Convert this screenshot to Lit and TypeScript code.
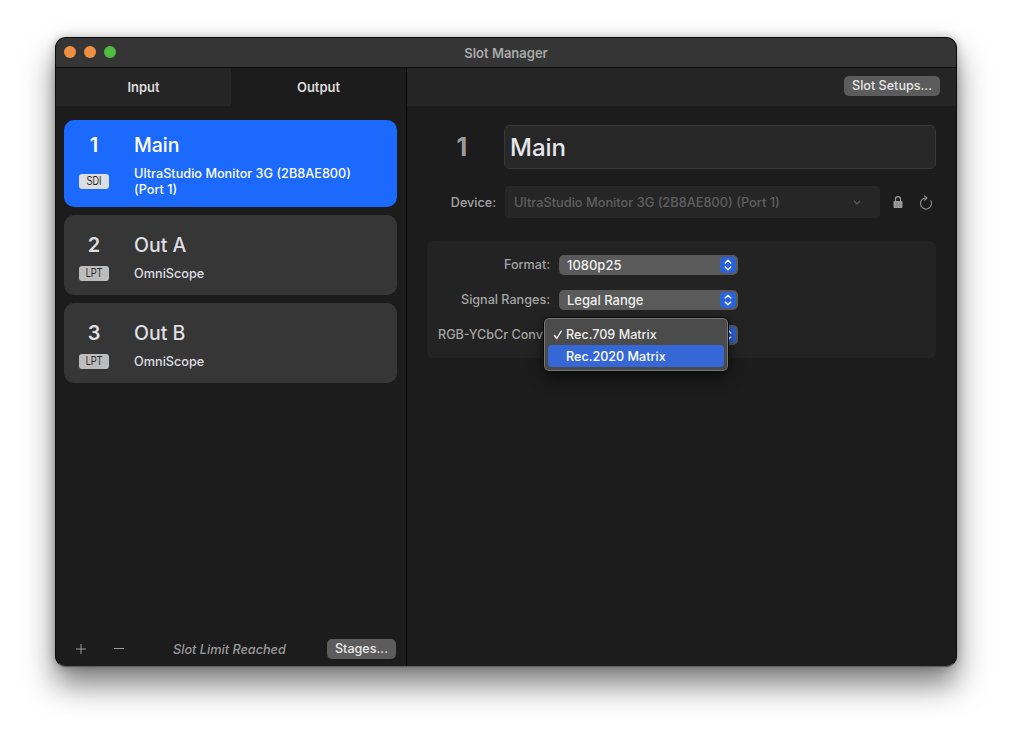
import { LitElement, css, html } from 'lit';
import { customElement } from 'lit/decorators.js';

const slots = [
  { n: '1', name: 'Main', tag: 'SDI', device: 'UltraStudio Monitor 3G (2B8AE800) (Port 1)', active: true },
  { n: '2', name: 'Out A', tag: 'LPT', device: 'OmniScope', active: false },
  { n: '3', name: 'Out B', tag: 'LPT', device: 'OmniScope', active: false },
];

const stepper = html`
  <span class="stepper">
    <svg width="8" height="14" viewBox="0 0 8 14" fill="none" stroke="#fff" stroke-width="1.4" stroke-linecap="round" stroke-linejoin="round">
      <path d="M1.2 5 4 2.2 6.8 5" />
      <path d="M1.2 9 4 11.8 6.8 9" />
    </svg>
  </span>
`;

@customElement('app-root')
export class AppRoot extends LitElement {
  static styles = css`
    :host {
      display: block;
      width: 1012px;
      height: 740px;
      padding: 37px 55px 0;
      box-sizing: border-box;
      background: #fff;
      font-family: Inter, 'Noto Sans', sans-serif;
      color: #e4e4e6;
      overflow: hidden;
    }
    .window {
      position: relative;
      width: 902px;
      height: 630px;
      box-sizing: border-box;
      display: flex;
      flex-direction: column;
      border: 1px solid #0c0c0c;
      border-bottom-color: #5c5c5c;
      border-radius: 11px;
      background: #1c1c1c;
      box-shadow: 0 18px 30px rgba(0, 0, 0, 0.5), 0 0 10px rgba(0, 0, 0, 0.25);
      overflow: hidden;
    }
    .titlebar {
      position: relative;
      flex: none;
      height: 29px;
      display: flex;
      align-items: center;
      justify-content: center;
      background: #353535;
      border-bottom: 1px solid #0e0e0e;
      font-size: 13px;
      font-weight: 600;
      color: #a9a9a9;
    }
    .lights {
      position: absolute;
      left: 8px;
      top: 8px;
      display: flex;
      gap: 8px;
    }
    .lights i {
      width: 12px;
      height: 12px;
      border-radius: 50%;
      background: #ef8e45;
    }
    .lights i.green {
      background: #4fbb3f;
    }
    .main {
      flex: 1;
      display: flex;
      min-height: 0;
    }
    .left {
      flex: none;
      width: 350px;
      display: flex;
      flex-direction: column;
      border-right: 1px solid #060606;
    }
    .tabs {
      flex: none;
      height: 38px;
      display: grid;
      grid-template-columns: 175px 175px;
      font-size: 13px;
      font-weight: 600;
      color: #dcdcdc;
    }
    .tabs div {
      display: flex;
      align-items: center;
      justify-content: center;
    }
    .tabs .off {
      background: #252525;
    }
    .list {
      flex: 1;
      padding: 14px 9px 0 8px;
      display: flex;
      flex-direction: column;
      gap: 8px;
    }
    .card {
      display: grid;
      grid-template-columns: 60px 1fr;
      column-gap: 10px;
      padding: 18px 30px 13px 0;
      border-radius: 10px;
      background: #363636;
      color: #dfdfe3;
    }
    .card.active {
      padding: 13px 30px 9px 0;
      background: #1b69fd;
      color: #fff;
    }
    .num {
      font-size: 20px;
      line-height: 24px;
      font-weight: 600;
      text-align: center;
    }
    .name {
      font-size: 19.5px;
      line-height: 24px;
      font-weight: 500;
    }
    .tagcell {
      margin-top: 8px;
      display: flex;
      align-items: center;
      justify-content: center;
    }
    .tag {
      width: 30px;
      height: 15px;
      border-radius: 3px;
      background: #bcbcbc;
      color: #2a2a2a;
      font-family: 'Liberation Sans', sans-serif;
      font-size: 12px;
      line-height: 15px;
      text-align: center;
    }
    .tag span {
      display: inline-block;
      transform: scaleX(0.75);
    }
    .active .tag {
      background: #dcdee2;
    }
    .device {
      margin-top: 9px;
      font-size: 12.7px;
      line-height: 16px;
      font-weight: 500;
    }
    .footer {
      flex: none;
      height: 38px;
      box-sizing: border-box;
      padding: 4px 10px 0 19px;
      display: flex;
      align-items: center;
      color: #9a9a9a;
    }
    .footer svg {
      flex: none;
    }
    .footer .minus {
      margin-left: 26px;
    }
    .limit {
      flex: 1;
      text-align: center;
      font-size: 12.7px;
      font-style: italic;
      font-weight: 500;
      padding-left: 7px;
      box-sizing: border-box;
    }
    .btn {
      flex: none;
      height: 20px;
      padding: 0 8px;
      border-radius: 5px;
      background: #5c5c5c;
      color: #e6e6e6;
      font-size: 12.6px;
      font-weight: 500;
      line-height: 19px;
      box-sizing: border-box;
    }
    .right {
      flex: 1;
      display: flex;
      flex-direction: column;
    }
    .toolbar {
      flex: none;
      height: 38px;
      box-sizing: border-box;
      padding: 8px 16px 0 0;
      display: flex;
      justify-content: flex-end;
      align-items: flex-start;
      background: #252525;
    }
    .detail {
      padding: 19px 20px 0 20px;
    }
    .title-row {
      display: flex;
      align-items: center;
      height: 44px;
    }
    .big-num {
      width: 77px;
      padding-right: 7px;
      box-sizing: border-box;
      text-align: center;
      font-size: 25px;
      font-weight: 700;
      color: #9b9b9b;
    }
    .field {
      flex: 1;
      height: 44px;
      box-sizing: border-box;
      padding-left: 5px;
      border: 1px solid #383838;
      border-radius: 6px;
      background: #272727;
      font-size: 24px;
      line-height: 43px;
      font-weight: 500;
      color: #e6e7ec;
    }
    .device-row {
      margin-top: 17px;
      height: 32px;
      display: flex;
      align-items: center;
      font-size: 12.8px;
      font-weight: 500;
      color: #a5a5a5;
    }
    .device-row label {
      width: 69px;
      text-align: right;
      font-size: 12.6px;
    }
    .fake-select {
      margin-left: 9px;
      width: 375px;
      height: 32px;
      box-sizing: border-box;
      padding: 0 19px 0 9px;
      display: flex;
      align-items: center;
      justify-content: space-between;
      border-radius: 4px;
      background: #262626;
      color: #5f5f5f;
    }
    .lock {
      margin-left: 12px;
    }
    .reload {
      margin-left: 15px;
    }
    .panel {
      margin-top: 23px;
      height: 117px;
      box-sizing: border-box;
      padding-top: 14px;
      display: flex;
      flex-direction: column;
      gap: 15px;
      border-radius: 6px;
      background: #232323;
    }
    .row {
      height: 20px;
      display: flex;
      align-items: center;
      font-size: 12.6px;
      font-weight: 500;
      color: #a5a5a5;
    }
    .row label {
      width: 123px;
      flex: none;
      box-sizing: border-box;
      padding-bottom: 2px;
      text-align: right;
      white-space: nowrap;
    }
    .row label.clip {
      padding-left: 11px;
      width: 116px;
      text-align: left;
      overflow: hidden;
    }
    .row label.clip + .popup {
      margin-left: 16px;
    }
    .row .popup {
      position: relative;
      margin-left: 9px;
      width: 179px;
      height: 20px;
      box-sizing: border-box;
      padding-left: 8px;
      display: flex;
      align-items: center;
      border-radius: 5px;
      background: #5a5a5a;
      color: #eee;
      font-size: 13px;
    }
    .stepper {
      position: absolute;
      right: 2px;
      top: 2px;
      width: 16px;
      height: 16px;
      display: flex;
      align-items: center;
      justify-content: center;
      border-radius: 4px;
      background: #2a63d8;
    }
    .menu {
      position: absolute;
      left: 487px;
      top: 279px;
      width: 186px;
      height: 55px;
      box-sizing: border-box;
      padding: 5px 4px;
      border: 1px solid #0a0a0a;
      border-radius: 6px;
      background: #4b4b4b;
      box-shadow: 0 0 0 1px #777 inset, 0 6px 14px rgba(0, 0, 0, 0.55);
      font-size: 12.6px;
      font-weight: 500;
      color: #eee;
    }
    .item {
      height: 22px;
      padding-left: 18px;
      position: relative;
      line-height: 24px;
      border-radius: 4px;
    }
    .item.on {
      background: #3568d6;
      color: #fff;
    }
    .check {
      position: absolute;
      left: 5px;
      top: 7px;
    }
  `;

  render() {
    return html`
      <div class="window">
        <div class="titlebar">
          <div class="lights"><i></i><i></i><i class="green"></i></div>
          Slot Manager
        </div>
        <div class="main">
          <div class="left">
            <div class="tabs">
              <div class="off">Input</div>
              <div>Output</div>
            </div>
            <div class="list">
              ${slots.map(
                (s) => html`
                  <div class="card ${s.active ? 'active' : ''}">
                    <div class="num">${s.n}</div>
                    <div class="name">${s.name}</div>
                    <div class="tagcell"><div class="tag"><span>${s.tag}</span></div></div>
                    <div class="device">${s.device}</div>
                  </div>
                `
              )}
            </div>
            <div class="footer">
              <svg width="12" height="12" viewBox="0 0 12 12" stroke="#9a9a9a" stroke-width="1"><path d="M6 1v10M1 6h10" /></svg>
              <svg class="minus" width="12" height="12" viewBox="0 0 12 12" stroke="#9a9a9a" stroke-width="1"><path d="M1 5.5h10" /></svg>
              <div class="limit">Slot Limit Reached</div>
              <div class="btn">Stages...</div>
            </div>
          </div>
          <div class="right">
            <div class="toolbar"><div class="btn">Slot Setups...</div></div>
            <div class="detail">
              <div class="title-row">
                <div class="big-num">1</div>
                <div class="field">Main</div>
              </div>
              <div class="device-row">
                <label>Device:</label>
                <div class="fake-select">
                  UltraStudio Monitor 3G (2B8AE800) (Port 1)
                  <svg width="8" height="5" viewBox="0 0 8 5" fill="none" stroke="#5f5f5f" stroke-width="1.2"><path d="M1 1l3 3 3-3" /></svg>
                </div>
                <svg class="lock" width="12" height="14" viewBox="0 0 12 14" fill="none">
                  <path d="M3.5 6.5V4.2a2.5 2.5 0 0 1 5 0v2.3" stroke="#999" stroke-width="1.3" />
                  <rect x="1.5" y="6" width="9" height="7" rx="1" fill="#999" />
                  <path d="M4 9h1M7 9h1M4 11h1M7 11h1" stroke="#777" stroke-width="1" />
                </svg>
                <svg class="reload" width="14" height="15" viewBox="0 0 14 15" fill="none" stroke="#8f8f8f" stroke-width="1.1" stroke-linecap="round" stroke-linejoin="round">
                  <path d="M11.76 5.75A5.5 5.5 0 1 1 7 3" />
                  <path d="M5.5.8 8 3 5.5 5.2" />
                </svg>
              </div>
              <div class="panel">
                <div class="row"><label>Format:</label><div class="popup">1080p25${stepper}</div></div>
                <div class="row"><label>Signal Ranges:</label><div class="popup">Legal Range${stepper}</div></div>
                <div class="row"><label class="clip">RGB-YCbCr Conv</label><div class="popup">${stepper}</div></div>
              </div>
            </div>
          </div>
        </div>
        <div class="menu">
          <div class="item">
            <svg class="check" width="10" height="10" viewBox="0 0 10 10" fill="none" stroke="#eee" stroke-width="1.4" stroke-linecap="round" stroke-linejoin="round"><path d="M1.5 5.5 3.8 8.5 8.2 1.2" /></svg>
            Rec.709 Matrix
          </div>
          <div class="item on">Rec.2020 Matrix</div>
        </div>
      </div>
    `;
  }
}
